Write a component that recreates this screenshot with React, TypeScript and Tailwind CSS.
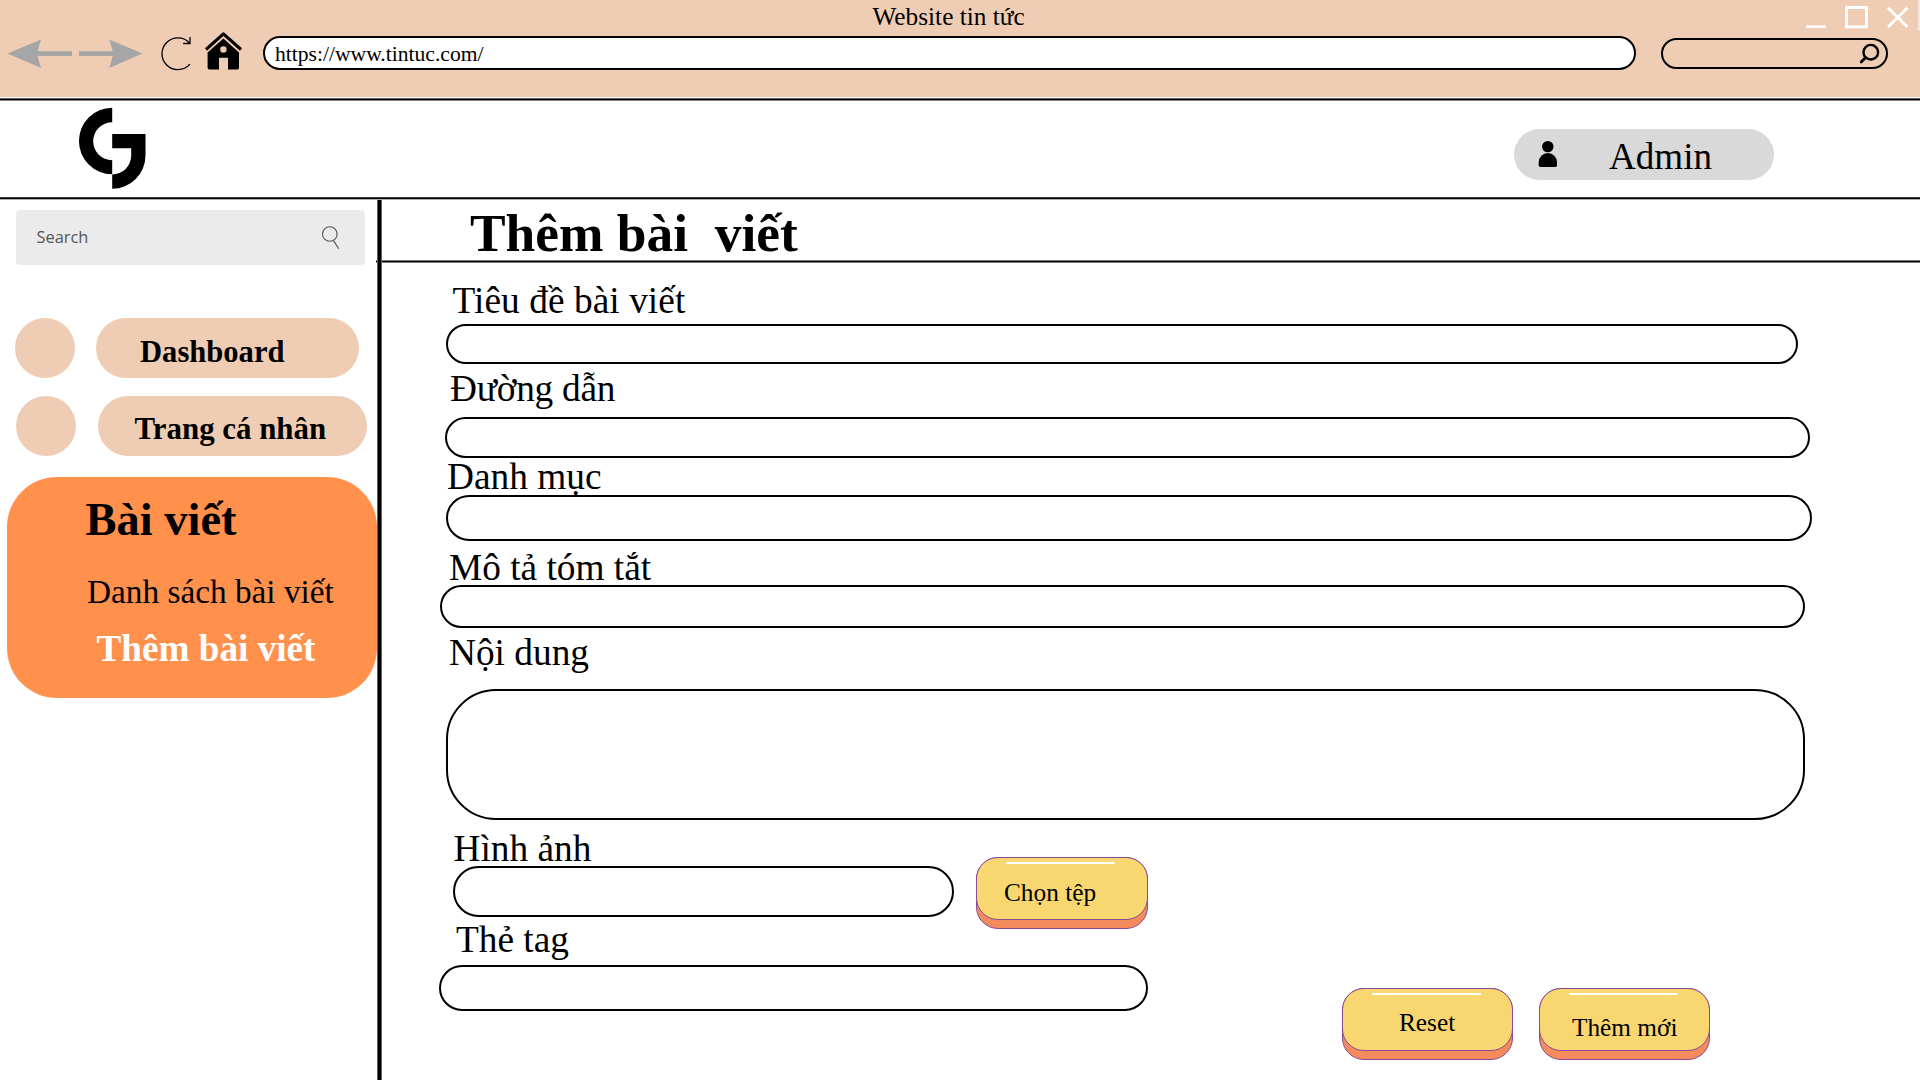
import type { ReactNode } from "react";

const serif = "font-['Liberation_Serif',serif]";

function Rule({ shades }: { shades: [string, string, string] }) {
  return (
    <div className="w-full shrink-0">
      {shades.map((shade, i) => (
        <div key={i} className={`h-px ${shade}`} />
      ))}
    </div>
  );
}

function Label({ className, children }: { className: string; children: ReactNode }) {
  return (
    <label className={`block h-[37px] w-max text-[37.33px] leading-[39px] whitespace-pre ${className}`}>
      {children}
    </label>
  );
}

function Field({ className }: { className: string }) {
  return <div className={`shrink-0 border-2 border-black bg-white ${className}`} />;
}

function KeyButton({ className, textClass, children }: { className: string; textClass: string; children: ReactNode }) {
  return (
    <button
      type="button"
      className={`flex h-[72px] shrink-0 flex-col items-stretch justify-start rounded-[22px] border border-[#8a4a98] bg-[#f48b5d] text-left ${className}`}
    >
      <span className="-mx-px -mt-px block h-[63px] rounded-[22px] border border-[#8a4a98] bg-[#f8d771] pt-[4px]">
        <span className="ml-[29px] block h-[2px] w-[109px] rounded-full bg-white" />
        <span className={`block w-max text-[25.3px] leading-[25px] ${textClass}`}>{children}</span>
      </span>
    </button>
  );
}

function TopBar() {
  return (
    <div className="h-[97px] w-full bg-[#efcdb5]">
      <div className="flex h-[32px] items-start">
        <h1 className="mt-[4px] ml-[872.5px] w-[933.5px] text-[25.3px] leading-[25px]">Website tin tức</h1>
        <svg className="mt-[4px] h-[26px] w-[104px]" viewBox="1806 4 104 26" fill="none" stroke="white">
          <path d="M1806 26.7H1826" strokeWidth="2.7" />
          <rect x="1846.5" y="7.5" width="20" height="19.3" strokeWidth="3" />
          <path d="M1888 7.7L1907.5 27M1907.5 7.7L1888 27" strokeWidth="2.7" />
        </svg>
        <div className="ml-[8px] h-[31px] w-[2px] bg-white/50" />
      </div>
      <div className="flex h-[40px] items-start">
        <svg className="h-[40px] w-[262px] shrink-0" viewBox="0 32 262 40">
          <path d="M7.5 53.5L41 39.5L37.5 51.2H72V56H37.5L41 68Z" fill="#a6a6a6" />
          <path d="M142.5 53.5L109.3 39.5L112.8 51.2H79V56H112.8L109.3 68Z" fill="#a6a6a6" />
          <path
            d="M189.9 43.3C186.7 39.5 182.8 37.8 177.9 37.8A15.9 15.9 0 0 0 177.9 69.6C182.8 69.6 186.9 67.7 189.9 64.2M190 37V43.5H183.2"
            fill="none"
            stroke="black"
            strokeWidth="1.3"
          />
          <path d="M206 49.5L223.4 33.9L241 49.5" fill="none" stroke="black" strokeWidth="3.1" strokeLinejoin="round" />
          <path
            fillRule="evenodd"
            d="M223.4 38.4L239 52.5V67.7Q239 69.5 237.3 69.5H228V57.7H219V69.5H209.3Q207.6 69.5 207.6 67.7V52.5ZM223.4 46.3A3.2 3.2 0 1 0 223.4 52.7A3.2 3.2 0 1 0 223.4 46.3Z"
          />
        </svg>
        <div className="mt-[4px] ml-[1px] h-[34px] w-[1373px] rounded-full border-2 border-black bg-white pt-[5px] pl-[10px] text-[21.6px] leading-[22px]">
          https://www.tintuc.com/
        </div>
        <div className="mt-[6px] ml-[25px] flex h-[31px] w-[227px] items-start justify-end rounded-full border-2 border-black">
          <svg className="mt-[2px] mr-[5px] h-[23px] w-[22px]" viewBox="1859 42 22 23" fill="none" stroke="black" strokeWidth="2.4">
            <circle cx="1870.8" cy="52.2" r="7.3" />
            <path d="M1865.6 57.6L1861.2 62" strokeLinecap="round" strokeWidth="2.8" />
          </svg>
        </div>
      </div>
    </div>
  );
}

function Brand() {
  return (
    <div className="flex h-[96px] items-start">
      <svg className="mt-[6px] ml-[78px] h-[84px] w-[70px]" viewBox="78 107 70 84">
        <path d="M112.2 107.8A33.25 33.25 0 0 0 112.2 174.3V160.2A19 19 0 0 1 112.2 122.2Z" />
        <path d="M112.2 134H145.5V155.5A33.3 33.3 0 0 1 112.2 188.8V174.5A19 19 0 0 0 131.2 155.5V148.2H112.2Z" />
      </svg>
      <div className="mt-[28px] ml-[1366px] flex h-[51px] w-[260px] rounded-full bg-[#d9d9d9]">
        <svg className="mt-[11px] ml-[23px] h-[28px] w-[22px]" viewBox="1537 140 22 28">
          <circle cx="1547.8" cy="146.6" r="5.7" />
          <path d="M1538.7 162.3A9.1 9.3 0 0 1 1557 162.3V165.3Q1557 167 1555.3 167H1540.4Q1538.7 167 1538.7 165.3Z" />
        </svg>
        <span className="mt-[9px] ml-[50px] text-[37.1px] leading-[37px]">Admin</span>
      </div>
    </div>
  );
}

function Sidebar() {
  return (
    <aside className="h-[880px] w-[377px] shrink-0">
      <div className="mt-[10px] ml-[16px] flex h-[55px] w-[349px] items-start rounded-[4px] bg-[#ebebeb] text-[#545454]">
        <span className="mt-[15px] ml-[20.5px] w-[283.5px] font-['Open_Sans',sans-serif] text-[16.4px] leading-[24px]">Search</span>
        <svg className="mt-[15px] h-[27px] w-[22px]" viewBox="320 225 22 27" fill="none" stroke="currentColor" strokeWidth="1.1">
          <circle cx="329.8" cy="234" r="7.3" />
          <path d="M333.4 240.4L338.7 248.8" />
        </svg>
      </div>
      <div className="mt-[53px] flex">
        <span className="ml-[14.5px] size-[60px] rounded-full bg-[#efcdb5]" />
        <div className="ml-[21px] h-[60px] w-[263.5px] rounded-full bg-[#efcdb5] pt-[19px] pl-[44.5px] text-[30.6px] leading-[31px] font-bold">
          Dashboard
        </div>
      </div>
      <div className="mt-[18px] flex">
        <span className="ml-[16px] size-[60px] rounded-full bg-[#efcdb5]" />
        <div className="ml-[22px] h-[60px] w-[269px] rounded-full bg-[#efcdb5] pt-[17px] pl-[36.5px] text-[30.9px] leading-[31px] font-bold">
          Trang cá nhân
        </div>
      </div>
      <nav className="mt-[21px] ml-[7px] h-[221px] w-[370px] rounded-[50px] bg-[#ff914d] pt-[19px]">
        <div className="ml-[78.5px] text-[46.5px] leading-[47px] font-bold">Bài viết</div>
        <div className="mt-[32px] ml-[80px] text-[33.3px] leading-[33px]">Danh sách bài viết</div>
        <div className="mt-[22px] ml-[89.5px] text-[37.2px] leading-[37px] font-bold text-white">Thêm bài viết</div>
      </nav>
    </aside>
  );
}

function PostForm() {
  return (
    <main className="h-[880px] min-w-0 flex-1">
      <h2 className="h-[60px] pt-[7px] pl-[88px] text-[53.4px] leading-[53px] font-bold whitespace-pre">Thêm bài  viết</h2>
      <div className="-ml-[6px]">
        <Rule shades={["bg-[#808080]", "bg-black", "bg-[#808080]"]} />
      </div>
      <Label className="mt-[18px] ml-[70.5px] tracking-[0.06px]">Tiêu đề bài viết</Label>
      <Field className="mt-[6px] ml-[64px] h-[40px] w-[1352px] rounded-full" />
      <Label className="mt-[5px] ml-[68px] tracking-[-0.25px]">Đường dẫn</Label>
      <Field className="mt-[11px] ml-[63px] h-[41px] w-[1365px] rounded-full" />
      <Label className="-mt-px ml-[65px]">Danh mục</Label>
      <Field className="mt-px ml-[64px] h-[46px] w-[1366px] rounded-full" />
      <Label className="mt-[7px] ml-[67px]">Mô tả tóm tắt</Label>
      <Field className="ml-[58px] h-[43px] w-[1365px] rounded-full" />
      <Label className="mt-[5px] ml-[67px]">Nội dung</Label>
      <Field className="mt-[19px] ml-[64px] h-[131px] w-[1359px] rounded-[50px]" />
      <div className="flex h-[109px] items-start">
        <div className="w-[594px]">
          <Label className="mt-[9px] ml-[71.5px]">Hình ảnh</Label>
          <Field className="ml-[71px] h-[51px] w-[501px] rounded-full" />
        </div>
        <KeyButton className="mt-[37px] w-[172px]" textClass="mt-[16px] ml-[27px]">Chọn tệp</KeyButton>
      </div>
      <div className="flex items-start">
        <div className="w-[960px]">
          <Label className="-mt-[9px] ml-[74px]">Thẻ tag</Label>
          <Field className="mt-[8px] ml-[57px] h-[46px] w-[709px] rounded-full" />
        </div>
        <KeyButton className="mt-[59px] w-[171px]" textClass="mt-[15px] ml-[56px]">Reset</KeyButton>
        <KeyButton className="mt-[59px] ml-[26px] w-[171px]" textClass="mt-[20px] ml-[32px]">Thêm mới</KeyButton>
      </div>
    </main>
  );
}

export default function App() {
  return (
    <div className={`h-[1080px] w-[1920px] overflow-hidden bg-white text-black ${serif}`}>
      <TopBar />
      <div className="h-px" />
      <Rule shades={["bg-[#606060]", "bg-black", "bg-[#808080]"]} />
      <Brand />
      <Rule shades={["bg-[#404040]", "bg-black", "bg-[#b0b0b0]"]} />
      <div className="flex">
        <Sidebar />
        <div className="relative z-10 w-[5px] shrink-0 border-x border-x-[#606060] bg-black" />
        <PostForm />
      </div>
    </div>
  );
}
